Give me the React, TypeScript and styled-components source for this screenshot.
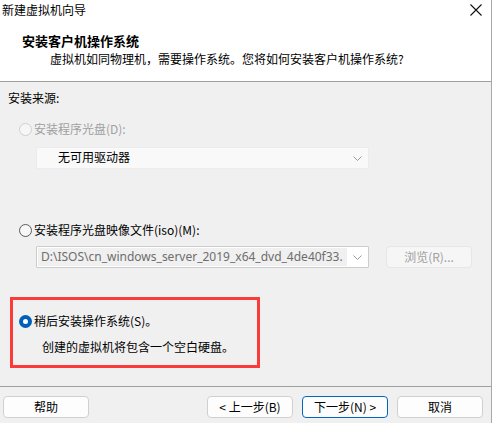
import React from "react";
import styled, { createGlobalStyle } from "styled-components";

const GlobalStyle = createGlobalStyle`
  html, body {
    margin: 0;
    padding: 0;
    background: #ffffff;
  }
  body {
    font-family: "Noto Sans CJK SC", "Noto Sans", sans-serif;
    font-size: 12px;
    color: #000;
  }
  * { box-sizing: border-box; }
`;

const Window = styled.div`
  width: 492px;
  height: 423px;
  border-right: 1px solid #a8a8a8;
  background: #f0f0f0;
  display: flex;
  flex-direction: column;
  overflow: hidden;
`;

const Top = styled.div`
  height: 82px;
  background: #fff;
  border-bottom: 1px solid #a0a0a0;
`;

const TitleBar = styled.div`
  height: 20px;
  display: flex;
  align-items: center;
  justify-content: space-between;
  padding: 0 9px 0 2px;
  line-height: 20px;
`;

const Header = styled.div`
  margin-top: 12px;
`;

const HeaderTitle = styled.div`
  padding-left: 22px;
  font-size: 13px;
  font-weight: 700;
  line-height: 18px;
`;

const HeaderSub = styled.div`
  padding-left: 50px;
  line-height: 18px;
`;

const Body = styled.div`
  flex: 1;
  padding-top: 7px;
`;

const Label = styled.div<{ $left?: number; $top?: number; $muted?: boolean }>`
  padding-left: ${(p) => p.$left ?? 0}px;
  margin-top: ${(p) => p.$top ?? 0}px;
  line-height: 18px;
  color: ${(p) => (p.$muted ? "#a0a0a0" : "#000")};
`;

const RadioRow = styled.div<{ $top: number; $left?: number }>`
  display: flex;
  align-items: center;
  gap: 2px;
  margin-top: ${(p) => p.$top}px;
  padding-left: ${(p) => p.$left ?? 19}px;
  line-height: 18px;
`;

const Circle = styled.span<{ $state: "disabled" | "off" | "on" }>`
  width: 13px;
  height: 13px;
  border-radius: 50%;
  flex: none;
  display: flex;
  align-items: center;
  justify-content: center;
  border: ${(p) =>
    p.$state === "on"
      ? "none"
      : p.$state === "off"
      ? "1px solid #5a5a5a"
      : "1px solid #cfcfcf"};
  background: ${(p) =>
    p.$state === "on" ? "#005fb8" : p.$state === "off" ? "#f7f7f7" : "#f6f6f6"};
  &::after {
    content: "";
    display: ${(p) => (p.$state === "on" ? "block" : "none")};
    width: 5px;
    height: 5px;
    border-radius: 50%;
    background: #fff;
  }
`;

const RadioText = styled.span<{ $muted?: boolean }>`
  color: ${(p) => (p.$muted ? "#a0a0a0" : "#000")};
`;

const FieldRow = styled.div<{ $top: number }>`
  display: flex;
  align-items: center;
  gap: 17px;
  margin-top: ${(p) => p.$top}px;
  padding-left: 36px;
`;

const Combo = styled.div<{ $framed?: boolean }>`
  width: 333px;
  height: 22px;
  display: flex;
  align-items: center;
  padding: 0 6px 0 ${(p) => (p.$framed ? 1 : 21)}px;
  background: ${(p) => (p.$framed ? "#fff" : "#f9f9f9")};
  border: 1px solid ${(p) => (p.$framed ? "#cccccc" : "#ececec")};
  border-radius: 1px;
`;

const ComboText = styled.span<{ $muted?: boolean }>`
  flex: 1;
  min-width: 0;
  height: 18px;
  line-height: 18px;
  white-space: nowrap;
  overflow: hidden;
  font-family: "Noto Sans", "Noto Sans CJK SC", sans-serif;
  color: ${(p) => (p.$muted ? "#6d6d6d" : "#000")};
  background: ${(p) => (p.$muted ? "#f0f0f0" : "transparent")};
  padding-left: ${(p) => (p.$muted ? 3 : 0)}px;
  margin-right: 6px;
`;

const Chevron = () => (
  <svg width="9" height="5" viewBox="0 0 9 5" style={{ flex: "none" }}>
    <path d="M0.5 0.5 L4.5 4.5 L8.5 0.5" fill="none" stroke="#9a9a9a" strokeWidth="1" />
  </svg>
);

const CloseIcon = () => (
  <svg width="12" height="12" viewBox="0 0 12 12">
    <path d="M0.5 0.5 L11.5 11.5 M11.5 0.5 L0.5 11.5" stroke="#111" strokeWidth="1.1" />
  </svg>
);

const Button = styled.button<{ $primary?: boolean; $disabled?: boolean }>`
  width: 86px;
  height: 22px;
  padding: 0;
  font-family: "Noto Sans CJK SC", "Noto Sans", sans-serif;
  font-size: 12px;
  line-height: 18px;
  border-radius: 4px;
  color: ${(p) => (p.$disabled ? "#a0a0a0" : "#000")};
  background: ${(p) => (p.$disabled ? "#f6f6f6" : "#fdfdfd")};
  border: 1px solid
    ${(p) => (p.$primary ? "#0067c0" : p.$disabled ? "#e6e6e6" : "#d0d0d0")};
`;

const Highlight = styled.div`
  width: 250px;
  height: 71px;
  margin: 29px 0 0 10px;
  border: 3px solid #fb3a3a;
  padding: 12px 0 0 6px;
`;

const Footer = styled.div`
  height: 37px;
  border-top: 1px solid #a0a0a0;
  display: flex;
  gap: 9px;
  padding: 9px 0 0 3px;
`;

const Spacer = styled.div`
  width: 100px;
`;

export default function App() {
  return (
    <>
      <GlobalStyle />
      <Window>
        <Top>
          <TitleBar>
            <span>新建虚拟机向导</span>
            <CloseIcon />
          </TitleBar>
          <Header>
            <HeaderTitle>安装客户机操作系统</HeaderTitle>
            <HeaderSub>虚拟机如同物理机，需要操作系统。您将如何安装客户机操作系统?</HeaderSub>
          </Header>
        </Top>
        <Body>
          <Label $left={8}>安装来源:</Label>
          <RadioRow $top={13}>
            <Circle $state="disabled" />
            <RadioText $muted>安装程序光盘(D):</RadioText>
          </RadioRow>
          <FieldRow $top={9}>
            <Combo>
              <ComboText>无可用驱动器</ComboText>
              <Chevron />
            </Combo>
          </FieldRow>
          <RadioRow $top={52}>
            <Circle $state="off" />
            <RadioText>安装程序光盘映像文件(iso)(M):</RadioText>
          </RadioRow>
          <FieldRow $top={7}>
            <Combo $framed>
              <ComboText $muted>D:\ISOS\cn_windows_server_2019_x64_dvd_4de40f33.</ComboText>
              <Chevron />
            </Combo>
            <Button $disabled>浏览(R)...</Button>
          </FieldRow>
          <Highlight>
            <RadioRow $top={0} $left={0}>
              <Circle $state="on" />
              <RadioText>稍后安装操作系统(S)。</RadioText>
            </RadioRow>
            <Label $left={23} $top={8}>创建的虚拟机将包含一个空白硬盘。</Label>
          </Highlight>
        </Body>
        <Footer>
          <Button>帮助</Button>
          <Spacer />
          <Button>&lt; 上一步(B)</Button>
          <Button $primary>下一步(N) &gt;</Button>
          <Button>取消</Button>
        </Footer>
      </Window>
    </>
  );
}
